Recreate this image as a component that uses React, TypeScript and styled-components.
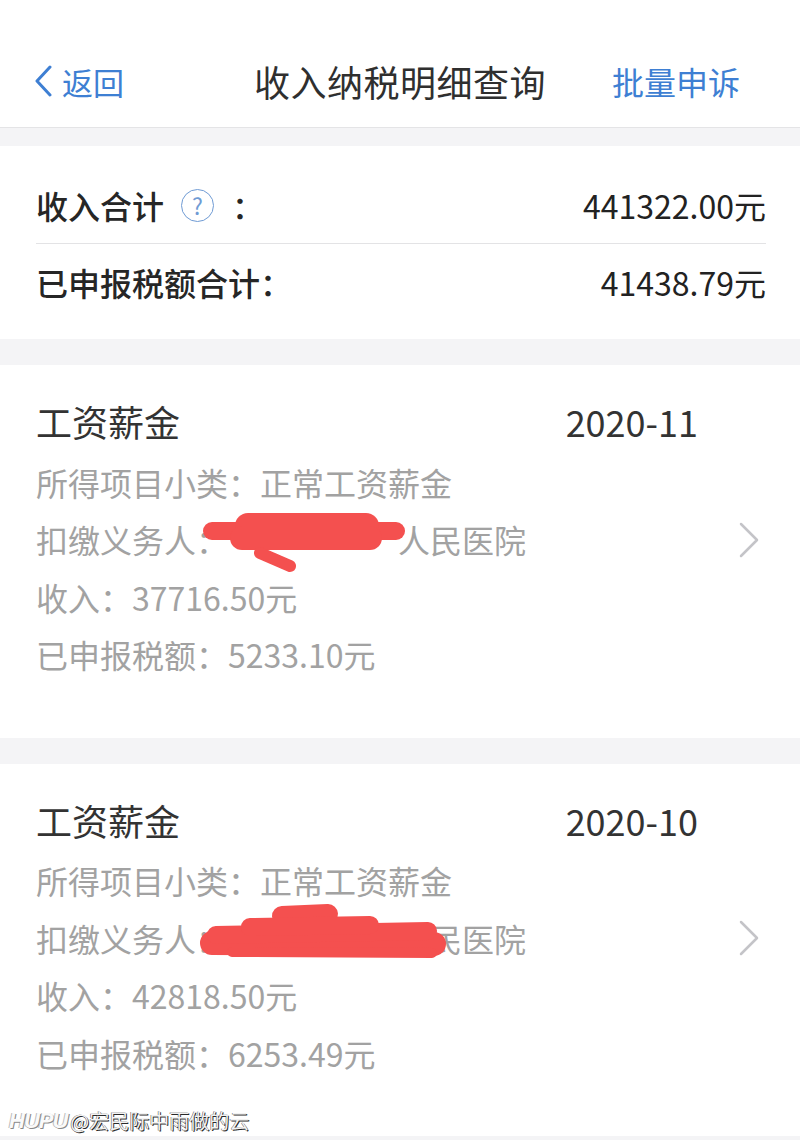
import styled, { createGlobalStyle } from "styled-components";

const GlobalStyle = createGlobalStyle`
  html, body {
    margin: 0;
    padding: 0;
    background: #f4f4f6;
  }
  body {
    font-family: "Noto Sans CJK SC", "Noto Sans", sans-serif;
    color: #333;
  }
`;

const Page = styled.div`
  position: relative;
  min-height: 1140px;
  overflow: hidden;
  background: #f4f4f6;
`;

const NavBar = styled.div`
  display: grid;
  grid-template-columns: 1fr auto 1fr;
  align-items: center;
  height: 92px;
  padding-top: 35px;
  background: #fff;
  border-bottom: 1px solid #e4e4e6;
`;

const BackButton = styled.div`
  display: flex;
  align-items: center;
  gap: 9px;
  padding-left: 33px;
  color: #3e7fd3;
  font-size: 31px;
  & svg {
    width: 20px;
    height: 32px;
  }
`;

const NavTitle = styled.div`
  font-size: 36px;
  color: #2f2f2f;
  letter-spacing: 0.5px;
`;

const NavAction = styled.div`
  justify-self: end;
  padding-right: 60px;
  color: #3e7fd3;
  font-size: 32px;
`;

const SummaryCard = styled.div`
  margin-top: 18px;
  background: #fff;
  padding: 21px 34px 19px 36px;
`;

const SummaryRow = styled.div<{ $divider?: boolean }>`
  display: flex;
  align-items: center;
  justify-content: space-between;
  height: 76px;
  border-top: ${(p) => (p.$divider ? "1px solid #e3e3e5" : "none")};
  font-size: 32px;
  color: #262626;
`;

const SummaryLabel = styled.div`
  display: flex;
  align-items: center;
  font-weight: 500;
`;

const HelpIcon = styled.span`
  display: inline-flex;
  align-items: center;
  justify-content: center;
  box-sizing: border-box;
  width: 33px;
  height: 33px;
  margin-left: 17px;
  border: 1.5px solid #6f9bd4;
  border-radius: 50%;
  color: #6f9bd4;
  font-size: 23px;
  font-weight: 400;
  line-height: 1;
`;

const Colon = styled.span`
  margin-left: 18px;
`;

const SummaryValue = styled.div`
  font-weight: 400;
  color: #222;
`;

const RecordCard = styled.div`
  display: flex;
  margin-top: 26px;
  background: #fff;
  padding: 31px 0 54px 36px;
`;

const RecordBody = styled.div`
  flex: 1;
`;

const RecordHead = styled.div`
  display: flex;
  justify-content: space-between;
  line-height: 50px;
  font-size: 36px;
  color: #333;
`;

const DetailList = styled.div`
  margin-top: 7.5px;
`;

const DetailLine = styled.div`
  position: relative;
  line-height: 57.5px;
  font-size: 32px;
  color: #a2a2a2;
  white-space: nowrap;
`;

const Redacted = styled.span`
  color: transparent;
  letter-spacing: 2px;
`;

const Scribble = styled.svg`
  position: absolute;
  left: 0;
  top: 0;
  width: 100%;
  height: 100%;
  overflow: visible;
  & path {
    fill: none;
    stroke: #f4504f;
    stroke-linecap: round;
  }
`;

const ChevronBox = styled.div`
  width: 102px;
  display: flex;
  align-items: center;
  & svg {
    margin-left: 40px;
    width: 22px;
    height: 38px;
  }
`;

const Watermark = styled.div`
  position: absolute;
  left: 9px;
  bottom: 4px;
  display: flex;
  align-items: center;
  gap: 3px;
  line-height: 30px;
`;

const WatermarkBrand = styled.span`
  font-family: "Liberation Sans", sans-serif;
  font-style: italic;
  font-weight: 700;
  font-size: 22px;
  color: #fafafa;
  text-shadow: 1px 1px 0 #8a8a8a, -1px 0 0 #bbb;
  letter-spacing: -1px;
`;

const WatermarkName = styled.span`
  font-size: 20px;
  color: #f2f2f2;
  text-shadow: 1px 1px 0 #2a2a2a, -0.5px -0.5px 0 #555;
`;

type Stroke = { d: string; w: number };

type Record = {
  month: string;
  income: string;
  tax: string;
  scribble: Stroke[];
};

const records: Record[] = [
  {
    month: "2020-11",
    income: "37716.50元",
    tax: "5233.10元",
    scribble: [
      { d: "M176 20 L360 20", w: 18 },
      { d: "M212 15 L330 15", w: 26 },
      { d: "M206 27 L334 27", w: 24 },
      { d: "M224 42 L254 55", w: 12 },
    ],
  },
  {
    month: "2020-10",
    income: "42818.50元",
    tax: "6253.49元",
    scribble: [
      { d: "M176 33 L398 34", w: 24 },
      { d: "M180 25 L392 21", w: 18 },
      { d: "M246 6 L292 4", w: 20 },
      { d: "M214 17 L334 15", w: 18 },
      { d: "M196 42 L396 43", w: 10 },
    ],
  },
];

const App = () => {
  return (
    <Page>
      <GlobalStyle />
      <NavBar>
        <BackButton>
          <svg viewBox="0 0 20 32">
            <path
              d="M17 2 L4 16 L17 30"
              fill="none"
              stroke="#3e7fd3"
              strokeWidth="3"
              strokeLinecap="round"
              strokeLinejoin="round"
            />
          </svg>
          返回
        </BackButton>
        <NavTitle>收入纳税明细查询</NavTitle>
        <NavAction>批量申诉</NavAction>
      </NavBar>

      <SummaryCard>
        <SummaryRow>
          <SummaryLabel>
            收入合计
            <HelpIcon>?</HelpIcon>
            <Colon>：</Colon>
          </SummaryLabel>
          <SummaryValue>441322.00元</SummaryValue>
        </SummaryRow>
        <SummaryRow $divider>
          <SummaryLabel>已申报税额合计：</SummaryLabel>
          <SummaryValue>41438.79元</SummaryValue>
        </SummaryRow>
      </SummaryCard>

      {records.map((r) => (
        <RecordCard key={r.month}>
          <RecordBody>
            <RecordHead>
              <span>工资薪金</span>
              <span>{r.month}</span>
            </RecordHead>
            <DetailList>
              <DetailLine>所得项目小类：正常工资薪金</DetailLine>
              <DetailLine>
                扣缴义务人：<Redacted>某某市第一</Redacted>人民医院
                <Scribble>
                  {r.scribble.map((s, i) => (
                    <path key={i} d={s.d} strokeWidth={s.w} />
                  ))}
                </Scribble>
              </DetailLine>
              <DetailLine>收入：{r.income}</DetailLine>
              <DetailLine>已申报税额：{r.tax}</DetailLine>
            </DetailList>
          </RecordBody>
          <ChevronBox>
            <svg viewBox="0 0 22 38">
              <path
                d="M3 3 L19 19 L3 35"
                fill="none"
                stroke="#c4c4c8"
                strokeWidth="2.5"
                strokeLinecap="round"
                strokeLinejoin="round"
              />
            </svg>
          </ChevronBox>
        </RecordCard>
      ))}

      <Watermark>
        <WatermarkBrand>HUPU</WatermarkBrand>
        <WatermarkName>@宏民际中雨做的云</WatermarkName>
      </Watermark>
    </Page>
  );
};

export default App;
